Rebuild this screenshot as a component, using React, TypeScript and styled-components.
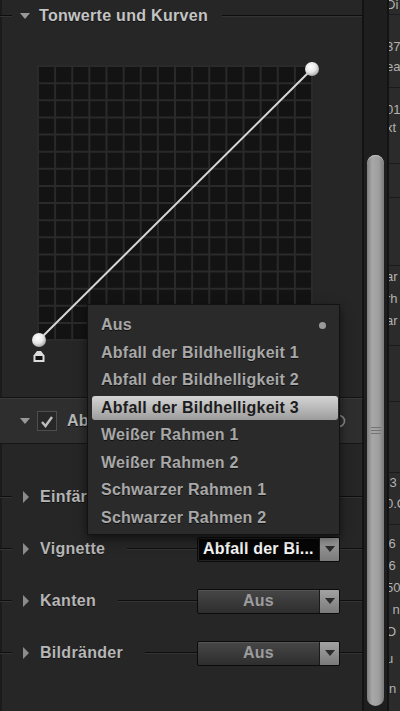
import styled, { createGlobalStyle } from "styled-components";

const Global = createGlobalStyle`
	html, body {
		margin: 0;
		padding: 0;
		background: #262626;
	}
	body {
		font-family: "Liberation Sans", Arial, sans-serif;
	}
`;

const Screen = styled.div`
	position: relative;
	display: flex;
	width: 400px;
	height: 711px;
	overflow: hidden;
	background: #262626;
`;

const Panel = styled.div`
	width: 362px;
	flex: none;
	display: flex;
	flex-direction: column;
	box-shadow: inset 2px 0 0 #1b1b1b;
`;

const Rule = styled.span<{ $w?: number; $ml?: number }>`
	display: block;
	height: 0;
	flex: ${p => (p.$w ? "none" : "1")};
	width: ${p => (p.$w ? `${p.$w}px` : "auto")};
	margin-left: ${p => p.$ml || 0}px;
	border-top: 1px solid #0e0e0e;
	border-bottom: 1px solid #343434;
`;

const DownTri = styled.span<{ $ml?: number }>`
	flex: none;
	width: 0;
	height: 0;
	margin-left: ${p => p.$ml || 0}px;
	border-left: 5.5px solid transparent;
	border-right: 5.5px solid transparent;
	border-top: 6px solid #999;
`;

const RightTri = styled.span`
	flex: none;
	width: 0;
	height: 0;
	margin-left: 11px;
	border-top: 6px solid transparent;
	border-bottom: 6px solid transparent;
	border-left: 6px solid #8c8c8c;
`;

const Header = styled.div`
	height: 32px;
	display: flex;
	align-items: center;
`;

const Title = styled.h2`
	margin: 0 0 0 9px;
	font: bold 16px/1 "Liberation Sans", Arial, sans-serif;
	letter-spacing: 0.3px;
	color: #c4c4c4;
	text-shadow: 0 1px 0 #111;
	white-space: nowrap;
`;

const Curves = styled.div`
	height: 366px;
	box-sizing: border-box;
	padding: 28px 0 0 30px;
	border-bottom: 1px solid #131313;
`;

const Band = styled.div`
	height: 46px;
	box-sizing: border-box;
	display: flex;
	align-items: center;
	padding-left: 20px;
	background: #2e2e2e;
	border-top: 1px solid #393939;
	border-bottom: 1px solid #161616;
`;

const Check = styled.span`
	flex: none;
	width: 20px;
	height: 20px;
	box-sizing: border-box;
	margin-left: 7px;
	display: flex;
	align-items: center;
	justify-content: center;
	background: #272727;
	border: 1px solid #4e4e4e;
`;

const Label = styled.span<{ $ml?: number }>`
	margin-left: ${p => p.$ml ?? 11}px;
	font: bold 16px/1 "Liberation Sans", Arial, sans-serif;
	letter-spacing: 0.3px;
	color: #b6b6b6;
	text-shadow: 0 1px 0 #111;
	white-space: nowrap;
`;

const Grow = styled.span`
	flex: 1;
`;

const Reset = styled.svg`
	flex: none;
	margin-right: 16px;
`;

const SubList = styled.div`
	display: flex;
	flex-direction: column;
	padding-top: 27px;
`;

const Row = styled.div`
	height: 52px;
	display: flex;
	align-items: center;
`;

const Select = styled.div<{ $active?: boolean }>`
	flex: none;
	width: 143px;
	height: 25px;
	box-sizing: border-box;
	display: flex;
	border: 1px solid #0b0b0b;
	border-radius: 2px;
	overflow: hidden;
	background: ${p =>
		p.$active ? "#060606" : "linear-gradient(#474747, #3a3a3a 50%, #2e2e2e)"};
	box-shadow: ${p => (p.$active ? "inset 0 0 0 1px #222" : "inset 0 1px 0 #555")};
`;

const SelectText = styled.span<{ $active?: boolean }>`
	flex: 1;
	display: flex;
	align-items: center;
	justify-content: ${p => (p.$active ? "flex-start" : "center")};
	padding-left: ${p => (p.$active ? 5 : 0)}px;
	font: bold 16px/1 "Liberation Sans", Arial, sans-serif;
	letter-spacing: 0.2px;
	color: ${p => (p.$active ? "#f4f4f4" : "#9c9c9c")};
	white-space: nowrap;
	overflow: hidden;
`;

const SelectArrow = styled.span`
	flex: none;
	width: 19px;
	display: flex;
	align-items: center;
	justify-content: center;
	background: linear-gradient(#a2a2a2, #7a7a7a);
	border-left: 1px solid #1a1a1a;
	&::after {
		content: "";
		width: 0;
		height: 0;
		border-left: 5px solid transparent;
		border-right: 5px solid transparent;
		border-top: 6px solid #2b2b2b;
	}
`;

const Menu = styled.ul`
	position: absolute;
	left: 87px;
	top: 304px;
	width: 253px;
	height: 231px;
	box-sizing: border-box;
	margin: 0;
	padding: 8px 1px 0 4px;
	list-style: none;
	display: flex;
	flex-direction: column;
	gap: 3.5px;
	background: #2a2a2a;
	border: 1px solid #121212;
	box-shadow: 0 4px 10px rgba(0, 0, 0, 0.55);
`;

const MenuItem = styled.li<{ $selected?: boolean }>`
	height: 24px;
	flex: none;
	display: flex;
	align-items: center;
	padding-left: 9px;
	border-radius: 3px;
	font: bold 16px/1 "Liberation Sans", Arial, sans-serif;
	letter-spacing: 0.25px;
	color: ${p => (p.$selected ? "#1c1c1c" : "#a8a8a8")};
	background: ${p =>
		p.$selected ? "linear-gradient(#d4d4d4, #b4b4b4 60%, #9c9c9c)" : "none"};
	text-shadow: ${p => (p.$selected ? "none" : "0 1px 0 #111")};
	white-space: nowrap;
`;

const Dot = styled.span`
	margin-left: auto;
	margin-right: 12px;
	width: 7px;
	height: 7px;
	border-radius: 50%;
	background: #9a9a9a;
`;

const Scroll = styled.div`
	width: 27px;
	flex: none;
	box-sizing: border-box;
	display: flex;
	flex-direction: column;
	padding: 155px 3px 5px 3px;
	background: #1e1e1e;
	border-left: 2px solid #131313;
	border-right: 2px solid #131313;
`;

const Thumb = styled.div`
	flex: 1;
	display: flex;
	align-items: center;
	justify-content: center;
	border-radius: 9px;
	background: linear-gradient(90deg, #7c7c7c, #a8a8a8 30%, #9e9e9e 70%, #7a7a7a);
	box-shadow: inset 0 1px 0 #bdbdbd;
`;

const Grip = styled.span`
	width: 10px;
	height: 1px;
	margin-bottom: 6px;
	background: #747474;
	box-shadow: 0 3px 0 #747474, 0 6px 0 #747474;
`;

const Strip = styled.div`
	width: 11px;
	flex: none;
	display: flex;
	flex-direction: column;
	overflow: hidden;
	background: #2b2b2b;
`;

const StripText = styled.span<{ $h: number }>`
	flex: none;
	height: ${p => p.$h}px;
	line-height: ${p => p.$h}px;
	margin-left: -3px;
	font-size: 13px;
	color: #b2b2b2;
	white-space: nowrap;
`;

const StripGap = styled.span<{ $h: number; $line?: boolean }>`
	flex: none;
	height: ${p => p.$h}px;
	border-bottom: ${p => (p.$line ? "1px solid #1b1b1b" : "none")};
`;

const CELL = 274 / 16;

function CurveGraph() {
	const ticks = Array.from({ length: 17 }, (_, i) => 8 + i * CELL);
	return (
		<svg width="290" height="305" viewBox="0 0 290 305">
			<defs>
				<radialGradient id="knob" cx="40%" cy="35%" r="65%">
					<stop offset="0" stopColor="#ffffff" />
					<stop offset="0.6" stopColor="#e6e6e6" />
					<stop offset="1" stopColor="#a9a9a9" />
				</radialGradient>
			</defs>
			<rect x="8" y="6" width="274" height="274" fill="#131313" />
			{ticks.map(t => (
				<g key={t} stroke="#2a2a2a" strokeWidth="2">
					<line x1={t} y1="6" x2={t} y2="280" />
					<line x1="8" y1={t - 2} x2="282" y2={t - 2} />
				</g>
			))}
			<line x1="9" y1="280" x2="282" y2="9" stroke="#d6d6d6" strokeWidth="2" />
			<circle cx="282" cy="9" r="7" fill="url(#knob)" />
			<circle cx="9" cy="280" r="7" fill="url(#knob)" />
			<path d="M3.5 302 V295.5 L7 291 H11 L14.5 295.5 V302 Z" fill="#dcdcdc" />
			<rect x="5.5" y="296" width="7" height="4" fill="#111" />
		</svg>
	);
}

const menuItems = [
	"Aus",
	"Abfall der Bildhelligkeit 1",
	"Abfall der Bildhelligkeit 2",
	"Abfall der Bildhelligkeit 3",
	"Weißer Rahmen 1",
	"Weißer Rahmen 2",
	"Schwarzer Rahmen 1",
	"Schwarzer Rahmen 2",
];

const rows = [
	{ label: "Einfärben", value: "Aus", active: false },
	{ label: "Vignette", value: "Abfall der Bi...", active: true },
	{ label: "Kanten", value: "Aus", active: false },
	{ label: "Bildränder", value: "Aus", active: false },
];

// clipped texts of the neighbouring panel: [text, height] or [null, height, line]
const strip: [string | null, number, boolean?][] = [
	["Di", 10],
	[null, 4, true],
	[null, 22],
	["37", 20],
	["ea", 20],
	[null, 10, true],
	[null, 12],
	["01", 20],
	["xt", 16],
	[null, 27, true],
	[null, 33, true],
	[null, 67, true],
	["ar", 22],
	["rh", 22],
	["ar", 22],
	[null, 13, true],
	[null, 55, true],
	[null, 70, true],
	[":3", 20],
	["0.C", 22],
	[null, 9, true],
	[null, 8],
	["'6", 22],
	["'6", 22],
	["50", 22],
	["i n", 22],
	["O", 22],
	[null, 5],
	["u", 22],
	[null, 8],
	["in", 22],
];

export default function App() {
	return (
		<Screen>
			<Global />
			<Panel>
				<Header>
					<Rule $w={12} />
					<DownTri $ml={8} />
					<Title>Tonwerte und Kurven</Title>
					<Rule $ml={14} />
				</Header>
				<Curves>
					<CurveGraph />
				</Curves>
				<Band>
					<DownTri />
					<Check>
						<svg width="14" height="13" viewBox="0 0 14 13">
							<path d="M2 7 L5.5 11 L12 2" fill="none" stroke="#bdbdbd" strokeWidth="2.4" />
						</svg>
					</Check>
					<Label $ml={10}>Abfall der Bildhelligkeit</Label>
					<Grow />
					<Reset width="14" height="14" viewBox="0 0 14 14">
						<circle cx="7" cy="7" r="5.5" fill="none" stroke="#8a8a8a" strokeWidth="1.6" />
					</Reset>
				</Band>
				<SubList>
					{rows.map(r => (
						<Row key={r.label}>
							<Rule $w={12} />
							<RightTri />
							<Label>{r.label}</Label>
							<Rule $ml={22} />
							<Select $active={r.active}>
								<SelectText $active={r.active}>{r.value}</SelectText>
								<SelectArrow />
							</Select>
							<Rule $w={22} />
						</Row>
					))}
				</SubList>
			</Panel>
			<Scroll>
				<Thumb>
					<Grip />
				</Thumb>
			</Scroll>
			<Strip>
				{strip.map(([t, h, line], i) =>
					t ? (
						<StripText key={i} $h={h}>
							{t}
						</StripText>
					) : (
						<StripGap key={i} $h={h} $line={line} />
					)
				)}
			</Strip>
			<Menu>
				{menuItems.map((m, i) => (
					<MenuItem key={m} $selected={i === 3}>
						{m}
						{i === 0 && <Dot />}
					</MenuItem>
				))}
			</Menu>
		</Screen>
	);
}
